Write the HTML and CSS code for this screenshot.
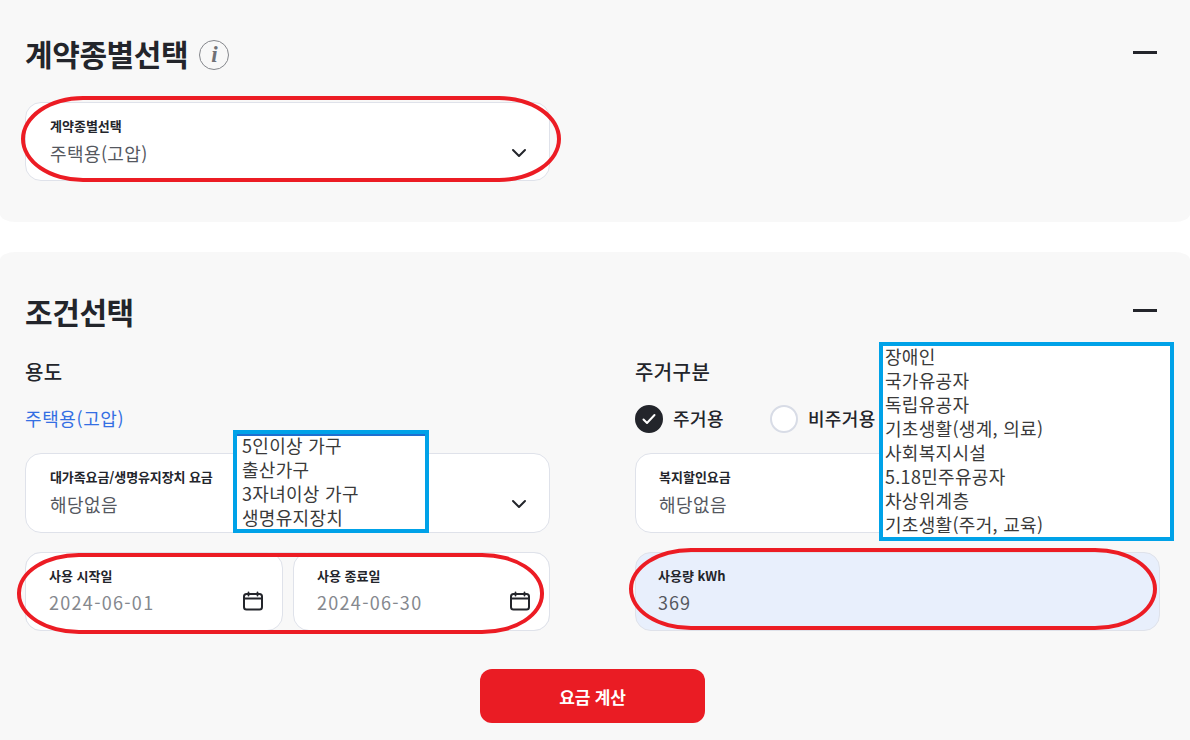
FILE: index.html
```html
<!DOCTYPE html>
<html lang="ko">
<head>
    <meta charset="UTF-8">
    <meta name="viewport" content="width=device-width, initial-scale=1.0">
    <title>요금 계산</title>
    <link rel="stylesheet" href="styles.css">
</head>
<body>
    <section class="panel panel-contract">
        <div class="panel-head">
            <h2>계약종별선택 <span class="info-icon">i</span></h2>
            <span class="collapse"></span>
        </div>
        <div class="field field-select contract-field">
            <label>계약종별선택</label>
            <div class="value">주택용(고압)</div>
            <svg class="chevron" viewBox="0 0 16 10"><path d="M2 2l6 6 6-6" fill="none" stroke="#23252b" stroke-width="2" stroke-linecap="round" stroke-linejoin="round"/></svg>
            <span class="oval oval-contract"></span>
        </div>
    </section>

    <section class="panel panel-condition">
        <div class="panel-head">
            <h2>조건선택</h2>
            <span class="collapse"></span>
        </div>
        <div class="columns">
            <div class="column">
                <h3>용도</h3>
                <div class="row-text usage-name">주택용(고압)</div>
                <div class="field field-select">
                    <label class="label-tight">대가족요금/생명유지장치 요금</label>
                    <div class="value">해당없음</div>
                    <svg class="chevron" viewBox="0 0 16 10"><path d="M2 2l6 6 6-6" fill="none" stroke="#23252b" stroke-width="2" stroke-linecap="round" stroke-linejoin="round"/></svg>
                    <div class="popup popup-family">
                        <div>5인이상 가구</div>
                        <div>출산가구</div>
                        <div>3자녀이상 가구</div>
                        <div>생명유지장치</div>
                    </div>
                </div>
                <div class="date-row">
                    <div class="field date-field date-start">
                        <label>사용 시작일</label>
                        <div class="value muted">2024-06-01</div>
                        <svg class="calendar" viewBox="0 0 20 20"><path d="M5.5 1.5v3M14.500 1.500v3M1 7.500h18" fill="none" stroke="#23252b" stroke-width="1.800" stroke-linecap="round"/><rect x="1" y="3" width="18" height="15.500" rx="2.500" fill="none" stroke="#23252b" stroke-width="2"/></svg>
                    </div>
                    <div class="field date-field date-end">
                        <label>사용 종료일</label>
                        <div class="value muted">2024-06-30</div>
                        <svg class="calendar" viewBox="0 0 20 20"><path d="M5.5 1.5v3M14.500 1.500v3M1 7.500h18" fill="none" stroke="#23252b" stroke-width="1.800" stroke-linecap="round"/><rect x="1" y="3" width="18" height="15.500" rx="2.500" fill="none" stroke="#23252b" stroke-width="2"/></svg>
                    </div>
                    <span class="oval oval-date"></span>
                </div>
            </div>
            <div class="column">
                <h3>주거구분</h3>
                <div class="row-text radios">
                    <span class="radio checked">
                        <svg viewBox="0 0 14 12"><path d="M1.500 6.500l3.500 3.500 7.500-8" fill="none" stroke="#fff" stroke-width="2" stroke-linecap="round" stroke-linejoin="round"/></svg>
                    </span>
                    <span class="radio-label">주거용</span>
                    <span class="radio"></span>
                    <span class="radio-label">비주거용</span>
                </div>
                <div class="field field-select welfare-field">
                    <label>복지할인요금</label>
                    <div class="value">해당없음</div>
                    <div class="popup popup-welfare">
                        <div>장애인</div>
                        <div>국가유공자</div>
                        <div>독립유공자</div>
                        <div>기초생활(생계, 의료)</div>
                        <div>사회복지시설</div>
                        <div>5.18민주유공자</div>
                        <div>차상위계층</div>
                        <div>기초생활(주거, 교육)</div>
                    </div>
                </div>
                <div class="field usage-field">
                    <label>사용량 kWh</label>
                    <div class="value">369</div>
                    <span class="oval oval-usage"></span>
                </div>
            </div>
        </div>
        <div class="actions">
            <button class="calc-button">요금 계산</button>
        </div>
    </section>
</body>
</html>
```

FILE: styles.css
```css
* {
    margin: 0;
    padding: 0;
    box-sizing: border-box;
}
html, body {
    height: 740px;
    overflow: hidden;
}
body {
    font-family: "Noto Sans CJK KR", "Noto Sans", sans-serif;
    background: #fff;
    color: #23252b;
}
.panel {
    background: #f8f8f8;
    padding-left: 25px;
    padding-right: 30px;
}
.panel-contract {
    height: 222px;
    padding-top: 33px;
    border-radius: 0 0 16px 16px / 0 0 8px 8px;
}
.panel-condition {
    margin-top: 30px;
    height: 488px;
    padding-top: 39px;
    border-radius: 16px 16px 0 0 / 8px 8px 0 0;
}
.panel-head {
    display: flex;
    align-items: center;
    justify-content: space-between;
    height: 40px;
    padding-right: 3px;
}
.panel-head h2 {
    display: flex;
    align-items: center;
    gap: 11px;
    font-size: 30px;
    line-height: 38px;
    margin-top: -1px;
    font-weight: 700;
    letter-spacing: -0.4px;
}
.info-icon {
    width: 30px;
    height: 30px;
    margin-top: 4px;
    border: 1.5px solid #85878c;
    border-radius: 50%;
    display: flex;
    align-items: center;
    justify-content: center;
    font-family: "Liberation Serif", serif;
    font-size: 23px;
    font-style: italic;
    font-weight: 700;
    color: #6f7176;
}
.collapse {
    width: 24px;
    height: 3px;
    margin-top: -2px;
    background: #23252b;
}

.field {
    position: relative;
    height: 79px;
    background: #fff;
    border: 1px solid #dfe2ea;
    border-radius: 16px;
    padding: 14px 24px 0;
}
.field label {
    display: block;
    font-size: 13px;
    line-height: 18px;
    font-weight: 700;
}
.field .label-tight {
    letter-spacing: -0.1px;
}
.field .value {
    margin-top: 4px;
    font-size: 18px;
    line-height: 28px;
    letter-spacing: 0.4px;
    color: #55585f;
}
.field .value.muted {
    margin-top: 3px;
    letter-spacing: 1.3px;
    color: #85888e;
}
.contract-field {
    margin-top: 29px;
    width: 525px;
}
.chevron {
    position: absolute;
    right: 22px;
    top: 45px;
    width: 16px;
    height: 10px;
}

.columns {
    display: grid;
    grid-template-columns: 525px 525px;
    gap: 85px;
    margin-top: 20px;
}
.column h3 {
    font-size: 20px;
    font-weight: 500;
    line-height: 42px;
    letter-spacing: 0.4px;
}
.row-text {
    height: 40px;
    margin-top: 5px;
    display: flex;
    align-items: center;
}
.usage-name {
    font-size: 18px;
    letter-spacing: 0.6px;
    color: #346fe3;
}
.column .field-select {
    margin-top: 15px;
    height: 80px;
}
.welfare-field {
    padding-left: 23px;
}
.radios {
    font-size: 18px;
    font-weight: 500;
    letter-spacing: 0.4px;
}
.radio {
    width: 28px;
    height: 28px;
    margin-top: 2px;
    border-radius: 50%;
    background: #fff;
    border: 2px solid #d8dce6;
    display: flex;
    align-items: center;
    justify-content: center;
}
.radio.checked {
    background: #23252b;
    border-color: #23252b;
}
.radio svg {
    width: 14px;
    height: 12px;
}
.radio-label {
    margin-left: 10px;
    margin-right: 46px;
}

.date-row {
    position: relative;
    display: flex;
    gap: 10px;
    height: 79px;
    margin-top: 19px;
    border: 1px solid #dfe2ea;
    border-radius: 16px;
}
.date-field {
    margin-top: -1px;
    height: 79px;
    padding-left: 23px;
}
.date-start {
    width: 258px;
    margin-left: -1px;
}
.date-end {
    width: 257px;
    margin-right: -1px;
}
.calendar {
    position: absolute;
    right: 19px;
    top: 38px;
    width: 20px;
    height: 20px;
}
.usage-field {
    margin-top: 19px;
    padding-left: 22px;
    background: #e8effc;
}
.usage-field .value {
    margin-top: 3px;
    letter-spacing: 1px;
}

.actions {
    display: flex;
    justify-content: center;
    margin-top: 38px;
}
.calc-button {
    width: 225px;
    height: 54px;
    border: none;
    border-radius: 12px;
    background: #ea1c24;
    color: #fff;
    font-family: inherit;
    font-size: 17px;
    font-weight: 700;
    letter-spacing: -0.2px;
}

/* 위에 덧그린 표시 */
.oval {
    position: absolute;
    border: 4px solid #ec1c24;
    pointer-events: none;
}
.oval-contract {
    left: -5px;
    top: -7px;
    width: 540px;
    height: 86px;
    border-radius: 62px / 43px;
}
.oval-date {
    left: -9px;
    top: 0;
    width: 527px;
    height: 81px;
    border-radius: 62px / 40px;
}
.oval-usage {
    left: -7px;
    top: -5px;
    width: 528px;
    height: 82px;
    border-radius: 62px / 41px;
}
.popup {
    position: absolute;
    background: #fff;
    border: 4px solid #00a2e8;
    font-size: 18px;
    line-height: 24px;
    letter-spacing: 0.3px;
    color: #3a3a3a;
    overflow: hidden;
}
.popup div:first-child {
    margin-top: -2px;
}
.popup-family {
    left: 207px;
    top: -24px;
    width: 196px;
    height: 103px;
    padding: 1px 0 0 5px;
    box-shadow: inset 0 2px 0 #1e6fd0;
}
.popup-welfare {
    left: 243px;
    top: -112px;
    width: 295px;
    height: 199px;
    padding: 0 0 0 2px;
}
```
